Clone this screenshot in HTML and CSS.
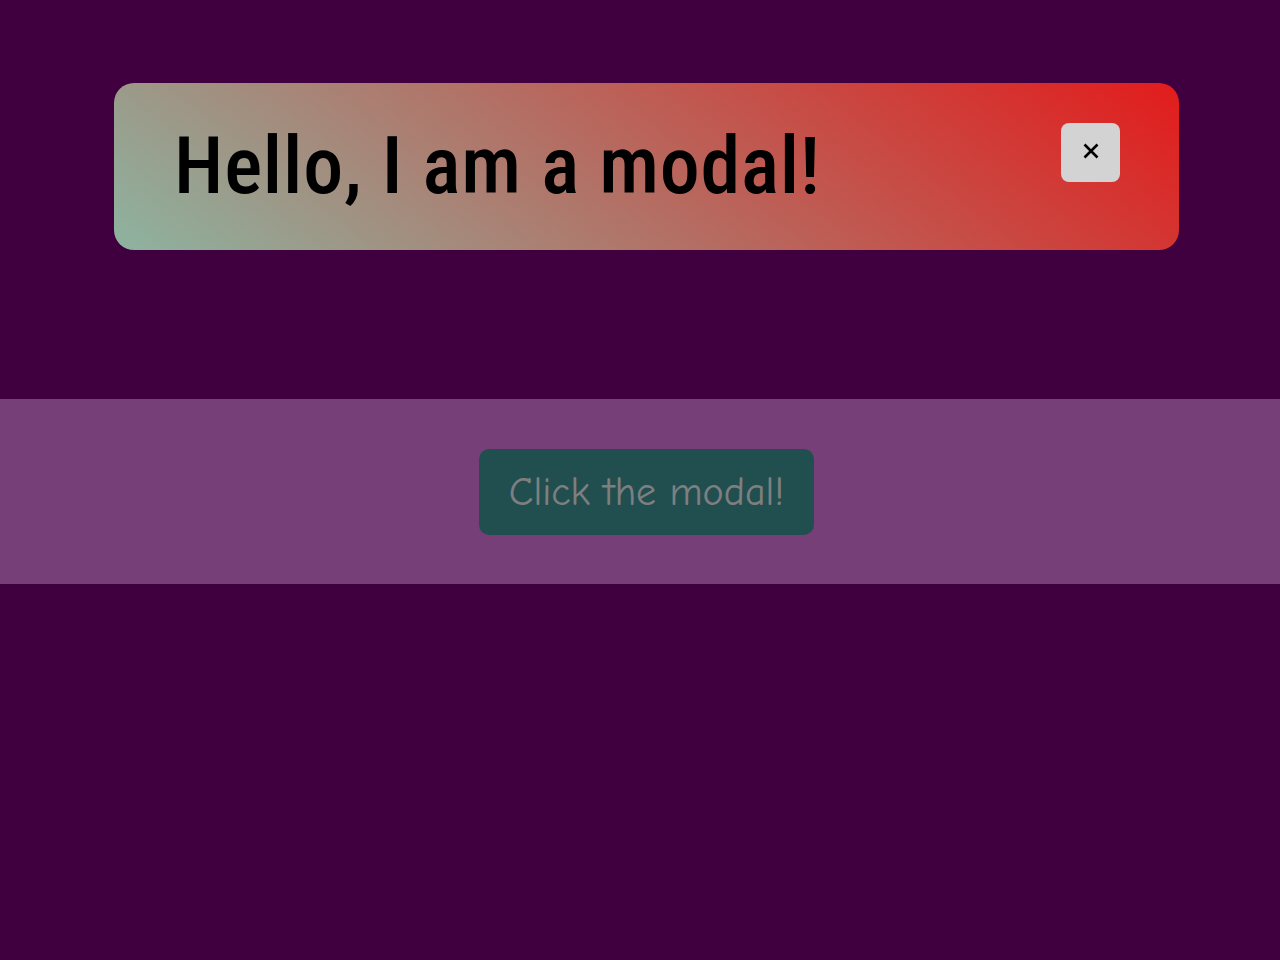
FILE: index.html
```html
<!DOCTYPE html>
<html lang="en">
<head>
  <meta charset="UTF-8">
  <title>Modal Demo</title>
  <link rel="stylesheet" href="styles.css">
</head>
<body>

  <main class="page">
    <section class="band">
      <button class="open-btn" id="openModal">Click the modal!</button>
    </section>
  </main>

  <div class="overlay" id="overlay"></div>

  <div class="modal" id="modal">
    <h1>Hello, I am a modal!</h1>
    <button class="close-btn" id="closeModal" aria-label="Close">
      <svg width="18" height="18" viewBox="0 0 18 18">
        <path d="M2.5 2.5 L15.5 15.5 M15.5 2.5 L2.5 15.5" stroke="#000" stroke-width="2.6"/>
      </svg>
    </button>
  </div>

  <script>
    const modal = document.getElementById("modal");
    const overlay = document.getElementById("overlay");

    function toggleModal(show) {
      modal.style.display = show ? "flex" : "none";
      overlay.style.display = show ? "block" : "none";
    }

    document.getElementById("openModal").addEventListener("click", () => toggleModal(true));
    document.getElementById("closeModal").addEventListener("click", () => toggleModal(false));
    overlay.addEventListener("click", () => toggleModal(false));
  </script>

</body>
</html>
```

FILE: styles.css
```css
body {
  margin: 0;
  min-height: 960px;
  background: #800080;
  font-family: Roboto, "Liberation Sans", sans-serif;
}

.page {
  padding-top: 399px;
}

.band {
  background: #ee7eee;
  padding: 50px 0 49px 13px;
  display: flex;
  justify-content: center;
}

.open-btn {
  width: 335px;
  height: 86px;
  background: #429c9e;
  color: #fff;
  border: none;
  border-radius: 10px;
  font-family: "Comic Sans MS", "Comic Neue", cursive;
  font-size: 40px;
  cursor: pointer;
}

.overlay {
  position: fixed;
  inset: 0;
  background: rgba(0, 0, 0, 0.5);
}

/* the modal sits above the overlay, so its colours are not dimmed */
.modal {
  position: fixed;
  top: 83px;
  left: 114px;
  width: 1065px;
  box-sizing: border-box;
  padding: 40px 59px 40px 60px;
  display: flex;
  justify-content: space-between;
  align-items: flex-start;
  border-radius: 20px;
  background: linear-gradient(38deg, #8db4a0, #e21c1c);
}

.modal h1 {
  margin: 0;
  font-size: 80px;
  font-weight: 500;
  font-stretch: 87.5%;
  letter-spacing: 0.8px;
  line-height: 87px;
  color: #000;
}

.close-btn {
  width: 59px;
  height: 59px;
  border: none;
  border-radius: 8px;
  background: #d3d3d3;
  display: flex;
  align-items: center;
  justify-content: center;
  padding: 0 0 4px;
  cursor: pointer;
}
```
